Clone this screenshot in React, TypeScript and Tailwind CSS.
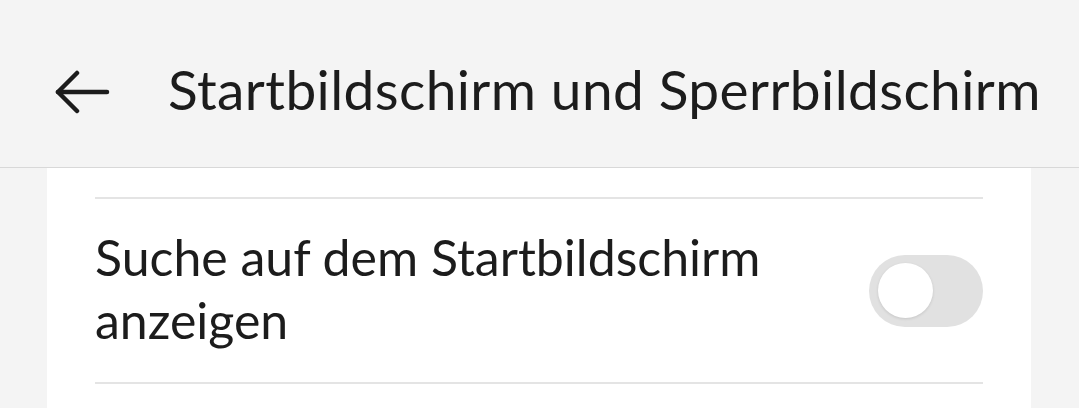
import React from 'react';

const BackArrow = () => (
    <svg width="56" height="44" viewBox="0 0 56 44" fill="none" stroke="#1c1c1c" strokeWidth="4.5" strokeLinecap="round" strokeLinejoin="round">
        <path d="M3 22 H52" />
        <path d="M22 3 L3 22 L22 41" />
    </svg>
);

const Toggle = () => (
    <div className="w-[114px] h-[72px] rounded-full bg-[#e1e1e1] flex items-center pl-[9px]">
        <div className="w-[55px] h-[55px] rounded-full bg-white shadow-[0_1px_3px_rgba(0,0,0,0.12)]" />
    </div>
);

const App = () => {
    return (
        <div className="w-[1079px] h-[408px] bg-[#f4f4f4] overflow-hidden text-[#1c1c1c]" style={{ fontFamily: 'Lato, "Noto Sans", sans-serif' }}>
            <div className="h-[168px] border-b border-[#d8d8d8] flex items-center pt-[16px]">
                <div className="w-[168px] pl-[55px] flex items-center">
                    <BackArrow />
                </div>
                <h1 className="text-[55px] leading-none tracking-[0.4px] whitespace-nowrap -mt-[4px]">Startbildschirm und Sperrbildschirm</h1>
            </div>

            <div className="mx-[47px] w-[984px] bg-white h-[240px] pt-[29px] px-[48px]">
                <div className="border-t-2 border-[#e4e4e4]" />
                <div className="h-[183px] flex items-center justify-between">
                    <p className="text-[50px] leading-[63px] w-[700px] -mt-[4px]">Suche auf dem Startbildschirm anzeigen</p>
                    <Toggle />
                </div>
                <div className="border-t-2 border-[#e4e4e4]" />
            </div>
        </div>
    );
};

export default App;
